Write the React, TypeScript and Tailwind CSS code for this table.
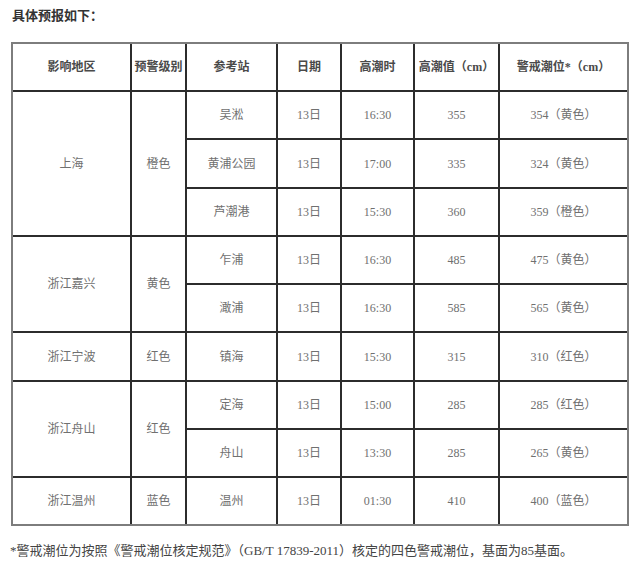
import React from "react";

const font = { fontFamily: '"Liberation Serif", "Noto Sans CJK SC", serif' };

type Cell = { t: string; span?: number };

const headers = ["影响地区", "预警级别", "参考站", "日期", "高潮时", "高潮值（cm）", "警戒潮位*（cm）"];

const rows: Cell[][] = [
  [{ t: "上海", span: 3 }, { t: "橙色", span: 3 }, { t: "吴淞" }, { t: "13日" }, { t: "16:30" }, { t: "355" }, { t: "354（黄色）" }],
  [{ t: "黄浦公园" }, { t: "13日" }, { t: "17:00" }, { t: "335" }, { t: "324（黄色）" }],
  [{ t: "芦潮港" }, { t: "13日" }, { t: "15:30" }, { t: "360" }, { t: "359（橙色）" }],
  [{ t: "浙江嘉兴", span: 2 }, { t: "黄色", span: 2 }, { t: "乍浦" }, { t: "13日" }, { t: "16:30" }, { t: "485" }, { t: "475（黄色）" }],
  [{ t: "澉浦" }, { t: "13日" }, { t: "16:30" }, { t: "585" }, { t: "565（黄色）" }],
  [{ t: "浙江宁波" }, { t: "红色" }, { t: "镇海" }, { t: "13日" }, { t: "15:30" }, { t: "315" }, { t: "310（红色）" }],
  [{ t: "浙江舟山", span: 2 }, { t: "红色", span: 2 }, { t: "定海" }, { t: "13日" }, { t: "15:00" }, { t: "285" }, { t: "285（红色）" }],
  [{ t: "舟山" }, { t: "13日" }, { t: "13:30" }, { t: "285" }, { t: "265（黄色）" }],
  [{ t: "浙江温州" }, { t: "蓝色" }, { t: "温州" }, { t: "13日" }, { t: "01:30" }, { t: "410" }, { t: "400（蓝色）" }],
];

export default function App() {
  return (
    <div className="w-[640px] h-[572px] bg-white px-[11px] pt-[6px]" style={font}>
      <div className="h-[20px] leading-[20px] text-[13px] font-bold text-[#333] pl-[1px]">具体预报如下：</div>
      <div className="mt-[16px] w-[618px] border-2 border-[#7d7d7d]">
        <div className="grid grid-cols-[117px_53px_89px_62px_71px_83px_127px] grid-rows-[46px_46px_47px_46px_46px_46px_47px_46px_46px_46px] gap-[2px] bg-[#2c2c2c]">
          {headers.map((h) => (
            <div key={h} className="bg-white flex items-center justify-center text-[12px] font-bold text-[#4a4a4a]">
              {h}
            </div>
          ))}
          {rows.flat().map((c, i) => (
            <div
              key={i}
              className={
                "bg-white flex items-center justify-center text-[12px] text-[#707070] " +
                (c.span === 3 ? "row-span-3" : c.span === 2 ? "row-span-2" : "")
              }
            >
              {c.t}
            </div>
          ))}
        </div>
      </div>
      <div className="mt-[15px] h-[20px] leading-[20px] text-[13px] text-[#444] -ml-[1px] whitespace-nowrap">
        *警戒潮位为按照《警戒潮位核定规范》（GB/T 17839-2011）核定的四色警戒潮位，基面为85基面。
      </div>
    </div>
  );
}
